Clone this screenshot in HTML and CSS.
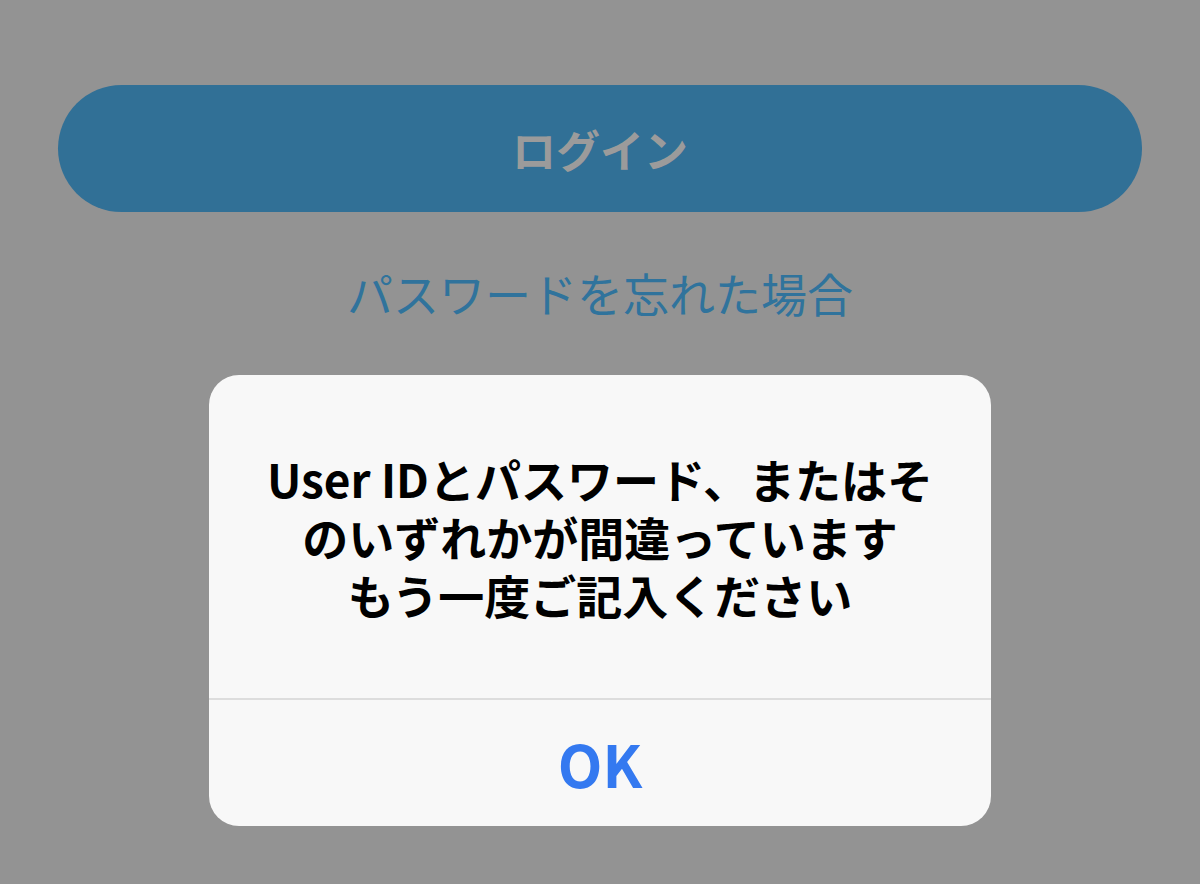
FILE: index.html
```html
<!DOCTYPE html>
<html lang="ja">
<head>
<meta charset="utf-8">
<link rel="stylesheet" href="styles.css">
</head>
<body>
<div class="screen">
  <div class="login-btn">ログイン</div>
  <div class="forgot">パスワードを忘れた場合</div>
  <div class="alert">
    <div class="message">User IDとパスワード、またはそ<br>のいずれかが間違っています<br>もう一度ご記入ください</div>
    <div class="actions"><span class="ok">OK</span></div>
  </div>
</div>
</body>
</html>
```
FILE: styles.css
```css
html, body {
  margin: 0;
  padding: 0;
  background: #939393;
}
.screen {
  width: 1200px;
  height: 884px;
  box-sizing: border-box;
  padding-top: 85px;
  display: flex;
  flex-direction: column;
  align-items: center;
  font-family: "Noto Sans CJK JP", "Noto Sans", sans-serif;
  overflow: hidden;
}
.login-btn {
  width: 1084px;
  height: 127px;
  border-radius: 64px;
  background: #317096;
  color: #9b9b9b;
  font-size: 44px;
  font-weight: 700;
  display: flex;
  align-items: center;
  justify-content: center;
}
.forgot {
  margin-top: 50px;
  height: 60px;
  line-height: 60px;
  font-size: 46px;
  color: #30739c;
  margin-bottom: 2px;
}
.alert {
  margin-top: 51px;
  width: 782px;
  background: #f8f8f8;
  border-radius: 30px;
  overflow: hidden;
}
.message {
  padding: 74px 20px 75px;
  text-align: center;
  font-size: 46px;
  line-height: 58px;
  font-weight: 700;
  color: #000;
}
.actions {
  border-top: 2px solid #dddddd;
  height: 126px;
  display: flex;
  align-items: center;
  justify-content: center;
}
.ok {
  font-size: 58px;
  line-height: 1;
  font-weight: 700;
  color: #3479f0;
}
```
